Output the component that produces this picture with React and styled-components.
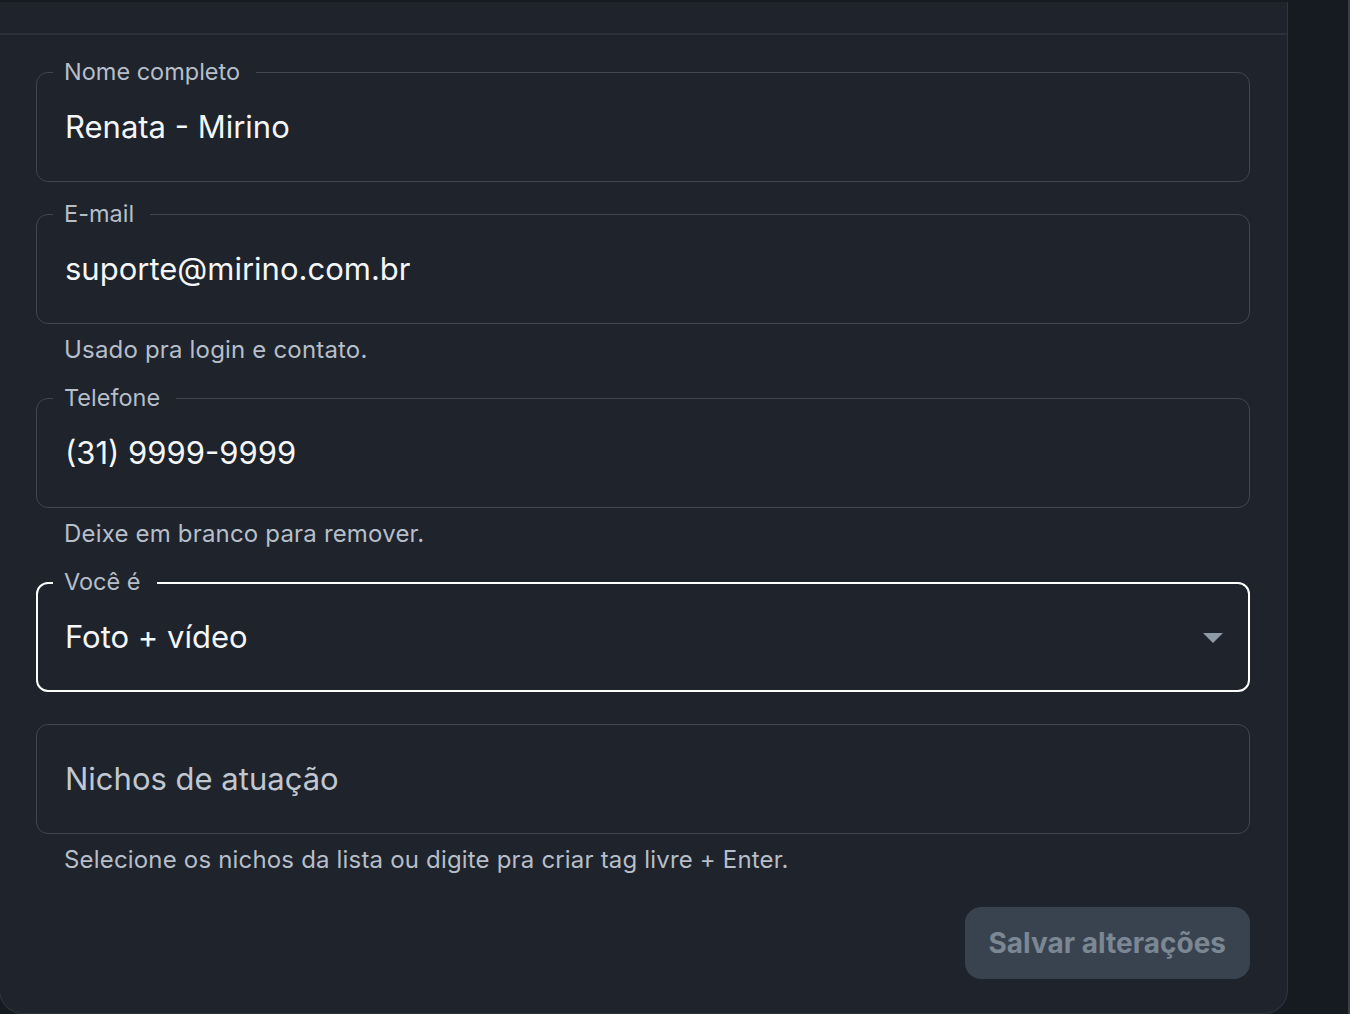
import React from "react";
import styled, { createGlobalStyle } from "styled-components";

const GlobalStyle = createGlobalStyle`
  html, body {
    margin: 0;
    padding: 0;
    background: #151a20;
    font-family: Inter, "Noto Sans", "Liberation Sans", sans-serif;
    overflow: hidden;
  }
  * { box-sizing: border-box; }
`;

const Page = styled.div`
  display: flex;
  width: 1350px;
  height: 1014px;
  padding-top: 2px;
  background: #161b21;
`;

const Card = styled.div`
  width: 1289px;
  margin-left: -1px;
  align-self: flex-start;
  background: #1e232c;
  border: 1px solid #2e3640;
  border-top: none;
  border-radius: 0 0 24px 24px;
`;

const Header = styled.div`
  height: 33px;
  border-bottom: 2px solid #2a313b;
`;

const Form = styled.div`
  display: flex;
  flex-direction: column;
  padding: 37px 37px 34px 36px;
`;

const Group = styled.div`
  display: flex;
  flex-direction: column;
  margin-bottom: ${p => p.gap}px;
`;

const Box = styled.div`
  position: relative;
  display: flex;
  align-items: center;
  justify-content: space-between;
  height: 110px;
  padding: 0 ${p => (p.focused ? 11 : 12)}px 0 ${p => (p.focused ? 27 : 28)}px;
  border: ${p => (p.focused ? "2px solid #ffffff" : "1px solid #3f4752")};
  border-radius: 12px;
`;

const Label = styled.span`
  position: absolute;
  top: ${p => (p.focused ? -14 : -13)}px;
  left: ${p => (p.focused ? 15 : 16)}px;
  padding: 0 16px 0 11px;
  background: #1e232c;
  color: #b6bec9;
  font-size: 23.5px;
  line-height: 24px;
`;

const Value = styled.span`
  color: ${p => (p.placeholder ? "#c1c7d0" : "#f4f6f8")};
  font-size: 31px;
  line-height: 40px;
`;

const Helper = styled.span`
  margin: 6px 28px 0;
  color: #b6bec9;
  font-size: 24px;
  line-height: 40px;
  letter-spacing: 0.18px;
`;

const Actions = styled.div`
  display: flex;
  justify-content: flex-end;
`;

const SaveButton = styled.button`
  height: 72px;
  padding: 0 24px;
  border: none;
  border-radius: 16px;
  background: #394350;
  color: #7c8794;
  font-family: inherit;
  font-size: 28px;
  font-weight: 700;
`;

const Spacer = styled.div`
  flex: 1;
`;

const ScrollEdge = styled.div`
  width: 2px;
  margin-top: -2px;
  background: #3a3f47;
`;

const Caret = () => (
  <svg width="48" height="48" viewBox="0 0 24 24">
    <path d="M7 10l5 5 5-5z" fill="#8f9aa8" />
  </svg>
);

const Field = ({ label, value, placeholder, helper, gap, focused, select }) => (
  <Group gap={gap}>
    <Box focused={focused}>
      {label && <Label focused={focused}>{label}</Label>}
      <Value placeholder={placeholder}>{value || placeholder}</Value>
      {select && <Caret />}
    </Box>
    {helper && <Helper>{helper}</Helper>}
  </Group>
);

export default function App() {
  return (
    <>
      <GlobalStyle />
      <Page>
        <Card>
          <Header />
          <Form>
            <Field label="Nome completo" value="Renata - Mirino" gap={32} />
            <Field
              label="E-mail"
              value="suporte@mirino.com.br"
              helper="Usado pra login e contato."
              gap={28}
            />
            <Field
              label="Telefone"
              value="(31) 9999-9999"
              helper="Deixe em branco para remover."
              gap={28}
            />
            <Field label="Você é" value="Foto + vídeo" focused select gap={32} />
            <Field
              placeholder="Nichos de atuação"
              helper="Selecione os nichos da lista ou digite pra criar tag livre + Enter."
              gap={27}
            />
            <Actions>
              <SaveButton>Salvar alterações</SaveButton>
            </Actions>
          </Form>
        </Card>
        <Spacer />
        <ScrollEdge />
      </Page>
    </>
  );
}
